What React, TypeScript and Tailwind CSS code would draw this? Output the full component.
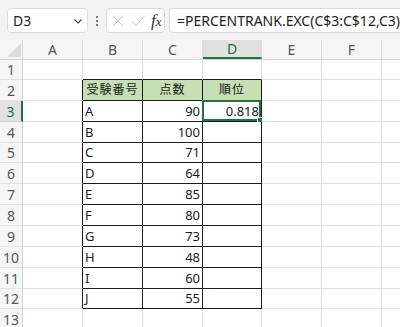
import React from "react";

const COLS = ["A", "B", "C", "D", "E", "F"];
const COLW = [60, 60, 60, 59, 60, 60];
const ROWH = [20, 21, 21, 21, 20, 21, 21, 21, 21, 21, 21, 20, 21];

const data: [string, string, string][] = [
  ["受験番号", "点数", "順位"],
  ["A", "90", "0.818"],
  ["B", "100", ""],
  ["C", "71", ""],
  ["D", "64", ""],
  ["E", "85", ""],
  ["F", "80", ""],
  ["G", "73", ""],
  ["H", "48", ""],
  ["I", "60", ""],
  ["J", "55", ""],
];

const font = { fontFamily: '"Noto Sans", "Noto Sans CJK JP", sans-serif' };

function Cell({ r, c }: { r: number; c: number }) {
  const inTable = r >= 2 && r <= 12 && c >= 1 && c <= 3;
  const darkRight = inTable || (c === 0 && r >= 2 && r <= 12);
  const darkBottom = inTable || (r === 1 && c >= 1 && c <= 3);
  const isHeader = r === 2 && inTable;
  const selected = r === 3 && c === 3;
  let text = "";
  let align = "justify-start";
  if (inTable) {
    text = data[r - 2][c - 1];
    if (isHeader) align = "justify-center";
    else if (c >= 2) align = "justify-end";
  }
  return (
    <div
      className={`relative flex shrink-0 items-center whitespace-nowrap border-r border-b px-[2px] text-[#1a1a1a] ${align} ${
        darkRight ? "border-r-[#1a1a1a]" : "border-r-[#e1e1e1]"
      } ${darkBottom ? "border-b-[#1a1a1a]" : "border-b-[#e1e1e1]"} ${
        isHeader ? "bg-[#c6e0b4] text-[12px] tracking-[1px]" : "bg-white text-[13px]"
      }`}
      style={{ width: COLW[c] }}
    >
      <span className="leading-none">{text}</span>
      {selected && (
        <div className="pointer-events-none absolute -left-[1px] -top-[1px] right-0 bottom-0 border-2 border-[#217346]">
          <div className="absolute -bottom-[4px] -right-[4px] h-[6px] w-[6px] border border-white bg-[#217346]" />
        </div>
      )}
    </div>
  );
}

export default function App() {
  return (
    <div className="h-[327px] w-[400px] overflow-hidden bg-white" style={font}>
      {/* Formula bar */}
      <div className="flex h-[40px] items-start bg-[#f3f3f3] pt-[8px]">
        <div className="ml-[7px] flex h-[25px] w-[83px] items-center justify-between rounded-[4px] border border-[#dcdcdc] bg-white pl-[5px] pr-[3px]">
          <span className="text-[14px] text-[#222]">D3</span>
          <svg width="10" height="10" viewBox="0 0 10 10" className="mr-[1px]">
            <path d="M1.5 3.5 L5 7 L8.5 3.5" fill="none" stroke="#444" strokeWidth="1.1" />
          </svg>
        </div>
        <div className="flex h-[25px] w-[18px] flex-col items-center justify-center gap-[2px]">
          <div className="h-[2px] w-[2px] rounded-full bg-[#555]" />
          <div className="h-[2px] w-[2px] rounded-full bg-[#555]" />
          <div className="h-[2px] w-[2px] rounded-full bg-[#555]" />
        </div>
        <div className="flex h-[25px] w-[60px] items-center rounded-[4px] border border-[#dcdcdc] bg-white pl-[5px]">
          <svg width="12" height="12" viewBox="0 0 12 12">
            <path d="M1 1 L11 11 M11 1 L1 11" stroke="#c4c4c4" strokeWidth="1" fill="none" />
          </svg>
          <svg width="14" height="12" viewBox="0 0 14 12" className="ml-[7px]">
            <path d="M1 6.5 L5 10.5 L13 1.5" stroke="#c4c4c4" strokeWidth="1" fill="none" />
          </svg>
          <span
            className="ml-[6px] text-[17px] italic leading-none text-[#333]"
            style={{ fontFamily: '"Liberation Serif", serif' }}
          >
            f<span className="text-[13px]">x</span>
          </span>
        </div>
        <div className="ml-[4px] flex h-[25px] flex-1 items-center rounded-l-[4px] border border-r-0 border-[#dcdcdc] bg-white pl-[7px]">
          <span className="whitespace-nowrap text-[14px] text-[#222]">=PERCENTRANK.EXC(C$3:C$12,C3)</span>
        </div>
      </div>
      {/* Column headers */}
      <div className="flex h-[20px] border-b border-[#d4d4d4] bg-[#f5f5f5]">
        <div className="relative flex w-[23px] shrink-0 items-end justify-end border-r border-[#dadada] pb-[2px] pr-[1px]">
          <svg width="14" height="14" viewBox="0 0 14 14">
            <path d="M14 0 L14 14 L0 14 Z" fill="#dcdcdc" />
          </svg>
        </div>
        {COLS.map((c, i) => (
          <div
            key={c}
            className={`flex shrink-0 items-center justify-center border-r text-[14px] ${
              i === 3
                ? "border-b-2 border-b-[#217346] border-r-[#dadada] bg-[#e1e1e1] text-[#1e6b3f]"
                : "border-r-[#dadada] text-[#555]"
            }`}
            style={{ width: COLW[i] }}
          >
            {c}
          </div>
        ))}
        <div className="flex-1" />
      </div>
      {/* Rows */}
      {ROWH.map((h, idx) => {
        const r = idx + 1;
        return (
          <div key={r} className="flex" style={{ height: h }}>
            <div
              className={`flex w-[23px] shrink-0 items-center justify-center border-b border-r text-[14px] ${
                r === 3
                  ? "border-b-[#d4d4d4] border-r-2 border-r-[#217346] bg-[#e1e1e1] text-[#1e6b3f]"
                  : "border-b-[#e1e1e1] border-r-[#d4d4d4] bg-[#f5f5f5] text-[#555]"
              }`}
            >
              {r}
            </div>
            {COLS.map((_, c) => (
              <Cell key={c} r={r} c={c} />
            ))}
            <div className="flex-1 border-b border-[#e1e1e1]" />
          </div>
        );
      })}
    </div>
  );
}
